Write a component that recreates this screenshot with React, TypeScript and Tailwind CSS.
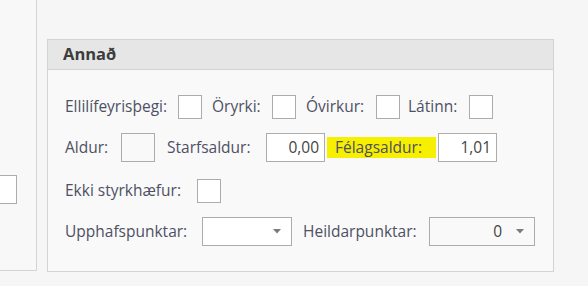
import React from "react";

const font = { fontFamily: '"Open Sans", "Noto Sans", "DejaVu Sans", sans-serif' };

function Check() {
  return <div className="w-[24px] h-[24px] border border-[#acacac] bg-white shrink-0" />;
}

function Arrow() {
  return (
    <svg width="8" height="5" viewBox="0 0 8 5" className="shrink-0">
      <path d="M0 0 H8 L4 4.5 Z" fill="#7a7a7a" />
    </svg>
  );
}

export default function App() {
  return (
    <div className="w-[588px] h-[286px] bg-[#f6f6f6] flex text-[15.5px] leading-none text-[#4e5064] overflow-hidden" style={font}>
      {/* left panel */}
      <div className="w-[37px] h-[271px] border-r border-b border-[#d4d4d4] bg-[#f8f8f8] shrink-0 flex flex-col">
        <div className="mt-[175px] w-[17px] h-[29px] border border-[#acacac] border-l-0 bg-white" />
      </div>
      {/* group box */}
      <div className="ml-[10px] mt-[39px] w-[507px] h-[233px] border border-[#d3d3d3] bg-[#f9f9f9] flex flex-col shrink-0">
        <div className="h-[30px] bg-[#e6e6e6] border-b border-[#d3d3d3] flex items-center pl-[15px]">
          <span className="font-bold text-[16.5px] text-[#3c3c3c]">Annað</span>
        </div>
        <div className="flex flex-col pl-[17px]">
          <div className="mt-[25px] h-[24px] flex items-center">
            <span className="w-[113px]">Ellilífeyrisþegi:</span>
            <Check />
            <span className="ml-[10px] w-[60px]">Öryrki:</span>
            <Check />
            <span className="ml-[10px] w-[70px]">Óvirkur:</span>
            <Check />
            <span className="ml-[8px] w-[61px]">Látinn:</span>
            <Check />
          </div>
          <div className="mt-[14px] h-[29px] flex items-center">
            <span className="w-[56px]">Aldur:</span>
            <div className="w-[34px] h-[29px] border border-[#acacac] bg-[#f9f9f9]" />
            <span className="ml-[12px] w-[99px]">Starfsaldur:</span>
            <div className="w-[59px] h-[29px] border border-[#acacac] bg-white flex items-center justify-end pr-[5px] text-[#444]">0,00</div>
            <span className="ml-[2px] w-[109px] bg-[#f7ef00] h-[21px] pl-[8px] flex items-center">Félagsaldur:</span>
            <div className="ml-[2px] w-[59px] h-[29px] border border-[#acacac] bg-white flex items-center justify-end pr-[5px] text-[#444]">1,01</div>
          </div>
          <div className="mt-[16px] h-[25px] flex items-center">
            <span className="w-[132px]">Ekki styrkhæfur:</span>
            <Check />
          </div>
          <div className="mt-[14px] h-[29px] flex items-center">
            <span className="w-[137px]">Upphafspunktar:</span>
            <div className="w-[90px] h-[29px] border border-[#acacac] bg-white flex items-center justify-end pr-[10px]">
              <Arrow />
            </div>
            <span className="ml-[11px] w-[126px]">Heildarpunktar:</span>
            <div className="w-[106px] h-[29px] border border-[#acacac] bg-[#f9f9f9] flex items-center justify-end pr-[10px] text-[#444]">
              <span className="mr-[14px]">0</span>
              <Arrow />
            </div>
          </div>
        </div>
      </div>
    </div>
  );
}
